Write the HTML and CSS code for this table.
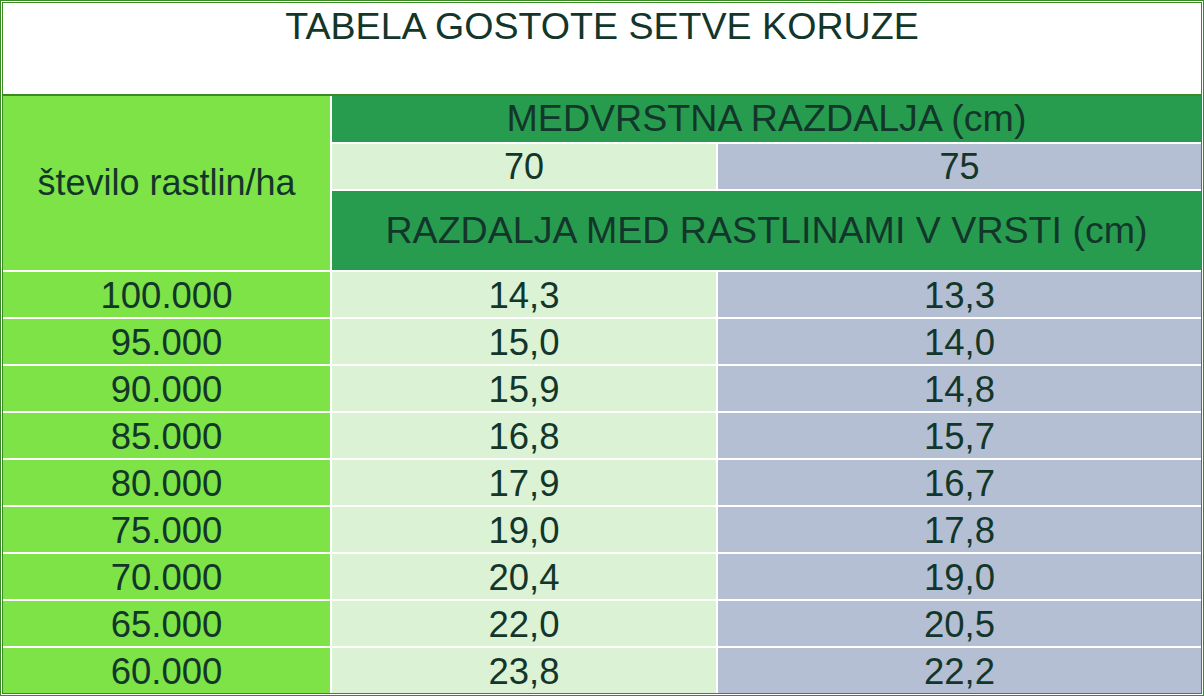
FILE: index.html
```html
<!DOCTYPE html>
<html>
<head>
<meta charset="utf-8">
<link rel="stylesheet" href="styles.css">
</head>
<body>
<div class="frame">
  <div class="title">TABELA GOSTOTE SETVE KORUZE</div>
  <div class="grid">
    <div class="cell c-lime rowhead">število rastlin/ha</div>
    <div class="cell c-dark span2 caps">MEDVRSTNA RAZDALJA (cm)</div>
    <div class="cell c-light">70</div>
    <div class="cell c-blue">75</div>
    <div class="cell c-dark span2 caps">RAZDALJA MED RASTLINAMI V VRSTI (cm)</div>

    <div class="cell c-lime d">100.000</div><div class="cell c-light d">14,3</div><div class="cell c-blue d">13,3</div>
    <div class="cell c-lime d">95.000</div><div class="cell c-light d">15,0</div><div class="cell c-blue d">14,0</div>
    <div class="cell c-lime d">90.000</div><div class="cell c-light d">15,9</div><div class="cell c-blue d">14,8</div>
    <div class="cell c-lime d">85.000</div><div class="cell c-light d">16,8</div><div class="cell c-blue d">15,7</div>
    <div class="cell c-lime d">80.000</div><div class="cell c-light d">17,9</div><div class="cell c-blue d">16,7</div>
    <div class="cell c-lime d">75.000</div><div class="cell c-light d">19,0</div><div class="cell c-blue d">17,8</div>
    <div class="cell c-lime d">70.000</div><div class="cell c-light d">20,4</div><div class="cell c-blue d">19,0</div>
    <div class="cell c-lime d">65.000</div><div class="cell c-light d">22,0</div><div class="cell c-blue d">20,5</div>
    <div class="cell c-lime d">60.000</div><div class="cell c-light d">23,8</div><div class="cell c-blue d">22,2</div>
  </div>
</div>
</body>
</html>
```

FILE: styles.css
```css
html, body {
  margin: 0;
  padding: 0;
  background: #ffffff;
}

body {
  font-family: "Liberation Sans", Arial, sans-serif;
  color: #13362b;
}

.frame {
  box-sizing: border-box;
  width: 1204px;
  height: 696px;
  border: 3px double #3a8a26;
  display: flex;
  flex-direction: column;
  background: #ffffff;
}

.title {
  height: 93px;
  box-sizing: border-box;
  padding-top: 5px;
  border-bottom: 2px solid #3a8a26;
  font-size: 37.6px;
  line-height: 1;
  text-align: center;
  flex: none;
}

.grid {
  flex: 1;
  display: grid;
  grid-template-columns: 327px 384px 1fr;
  grid-template-rows: 46px 45px 79px repeat(9, 45px);
  gap: 2px;
  background: #ffffff;
}

.cell {
  display: flex;
  align-items: center;
  justify-content: center;
  font-size: 36px;
  line-height: 1;
  white-space: nowrap;
}

.caps {
  font-size: 37.6px;
}

.span2 {
  grid-column: 2 / 4;
}

.rowhead {
  grid-row: 1 / 4;
}

.d {
  font-size: 36.5px;
  padding-top: 3px;
  box-sizing: border-box;
}

.c-lime {
  background: #7de347;
}

.c-dark {
  background: #279c4f;
}

.c-light {
  background: #dcf2d5;
}

.c-blue {
  background: #b4bfd3;
}
```
